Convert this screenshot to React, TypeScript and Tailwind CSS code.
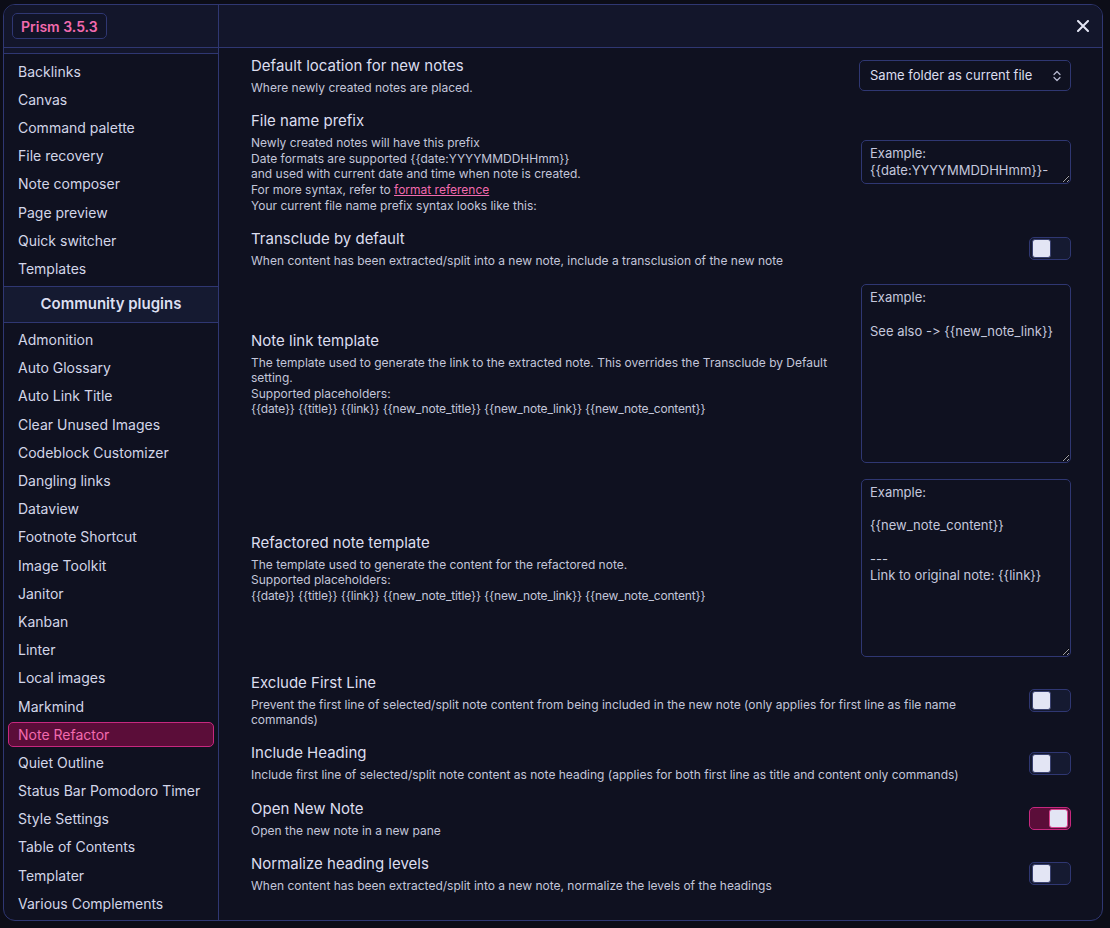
import React from 'react';

const corePlugins = [
  'Backlinks',
  'Canvas',
  'Command palette',
  'File recovery',
  'Note composer',
  'Page preview',
  'Quick switcher',
  'Templates',
];

const communityPlugins = [
  'Admonition',
  'Auto Glossary',
  'Auto Link Title',
  'Clear Unused Images',
  'Codeblock Customizer',
  'Dangling links',
  'Dataview',
  'Footnote Shortcut',
  'Image Toolkit',
  'Janitor',
  'Kanban',
  'Linter',
  'Local images',
  'Markmind',
  'Note Refactor',
  'Quiet Outline',
  'Status Bar Pomodoro Timer',
  'Style Settings',
  'Table of Contents',
  'Templater',
  'Various Complements',
];

const placeholders = '{{date}} {{title}} {{link}} {{new_note_title}} {{new_note_link}} {{new_note_content}}';

function NavItem({ label, active }: { label: string; active?: boolean }) {
  return (
    <div className="h-[28.2px] px-[4px] py-[1.6px]">
      <div
        className={
          active
            ? 'h-full px-[9px] flex items-center rounded-[5px] border border-[#c7287f] bg-[#5b0d39] text-[#f26aae] text-[14px]'
            : 'h-full px-[9px] flex items-center rounded-[5px] border border-transparent text-[#d3d6e8] text-[14px]'
        }
      >
        {label}
      </div>
    </div>
  );
}

function Toggle({ on }: { on?: boolean }) {
  return (
    <div
      className={
        on
          ? 'w-[42px] h-[23px] rounded-[5px] border border-[#c7287f] bg-[#5b0d39] flex items-center justify-end px-[2px] shrink-0'
          : 'w-[42px] h-[23px] rounded-[5px] border border-[#2f3772] bg-[#151a31] flex items-center justify-start px-[2px] shrink-0'
      }
    >
      <div
        className={
          on
            ? 'w-[19px] h-[19px] rounded-[3px] bg-[#e3e5f4] border border-[#d9428f]'
            : 'w-[19px] h-[19px] rounded-[3px] bg-[#e3e5f4] border border-[#3a4170]'
        }
      />
    </div>
  );
}

function TextBox({ value, h }: { value: string; h: string }) {
  return (
    <textarea
      readOnly
      defaultValue={value}
      className={`${h} w-[210px] shrink-0 rounded-[5px] border border-[#2f3772] bg-[#0f1120] px-[8px] py-[4px] text-[13px] leading-[16.7px] text-[#c4c7dc] outline-none overflow-hidden [font-feature-settings:'calt'_0,'liga'_0]`}
    />
  );
}

function Setting({
  title,
  children,
  control,
}: {
  title: string;
  children: React.ReactNode;
  control: React.ReactNode;
}) {
  return (
    <div className="flex items-center gap-6">
      <div className="flex-1 min-w-0">
        <div className="text-[15px] leading-[20px] text-[#dcdeef]">{title}</div>
        <div className="mt-[4px] text-[12px] leading-[15.6px] text-[#c3c6da]">{children}</div>
      </div>
      {control}
    </div>
  );
}

export default function App() {
  return (
    <div className="min-h-screen bg-[#0c0d17] pt-[4px] pl-[3px] font-[family-name:Inter,Liberation_Sans,sans-serif]">
      <div className="w-[1100px] h-[917px] rounded-[12px] border border-[#2f3772] bg-[#0f1120] flex overflow-hidden">
        {/* Sidebar */}
        <aside className="w-[215px] shrink-0 border-r border-[#2f3772] flex flex-col">
          <div className="h-[43px] shrink-0 border-b border-[#2f3772] bg-[#13162b] pl-[8px] pt-[8px]">
            <div className="inline-flex items-center h-[26px] px-[8px] rounded-[5px] border border-[#2f3772] bg-[#111428] text-[14px] font-semibold text-[#f26aae]">
              Prism 3.5.3
            </div>
          </div>
          <div className="h-[5px] shrink-0 bg-[#13162b]" />
          <div className="flex-1 flex flex-col border-t border-[#2f3772] pt-[3px]">
            {corePlugins.map((p) => (
              <NavItem key={p} label={p} />
            ))}
            <div className="mt-[3px] h-[37px] shrink-0 border-y border-[#2f3772] bg-[#151a31] flex items-center justify-center text-[15px] font-semibold text-[#dcdff0]">
              Community plugins
            </div>
            <div className="pt-[3px] flex flex-col">
              {communityPlugins.map((p) => (
                <NavItem key={p} label={p} active={p === 'Note Refactor'} />
              ))}
            </div>
          </div>
        </aside>

        {/* Content */}
        <main className="flex-1 min-w-0 flex flex-col">
          <div className="h-[43px] shrink-0 border-b border-[#2f3772] bg-[#13162b] flex items-center justify-end pr-[13px]">
            <svg width="12" height="12" viewBox="0 0 12 12" className="text-[#e3e5f4]">
              <path d="M1 1L11 11M11 1L1 11" stroke="currentColor" strokeWidth="2" strokeLinecap="round" />
            </svg>
          </div>
          <div className="flex-1 pl-[32px] pr-[31px] pt-[8px] flex flex-col gap-[15.7px]">
            <Setting
              title="Default location for new notes"
              control={
                <div className="w-[212px] h-[31px] shrink-0 rounded-[5px] border border-[#2f3772] bg-[#0f1120] pl-[10px] pr-[9px] flex items-center justify-between text-[13px] text-[#dcdeef]">
                  <span>Same folder as current file</span>
                  <svg width="8" height="12" viewBox="0 0 8 12" className="text-[#b9bcd2]">
                    <path d="M1 4.5L4 1.5L7 4.5M1 7.5L4 10.5L7 7.5" fill="none" stroke="currentColor" strokeWidth="1.2" strokeLinecap="round" strokeLinejoin="round" />
                  </svg>
                </div>
              }
            >
              Where newly created notes are placed.
            </Setting>

            <Setting
              title="File name prefix"
              control={<TextBox h="h-[44px]" value={'Example:\n{{date:YYYYMMDDHHmm}}-'} />}
            >
              <div>Newly created notes will have this prefix</div>
              <div>Date formats are supported {'{{date:YYYYMMDDHHmm}}'}</div>
              <div>and used with current date and time when note is created.</div>
              <div>
                For more syntax, refer to{' '}
                <span className="text-[#f26aae] underline">format reference</span>
              </div>
              <div>Your current file name prefix syntax looks like this:</div>
            </Setting>

            <Setting title="Transclude by default" control={<Toggle />}>
              When content has been extracted/split into a new note, include a transclusion of the new note
            </Setting>

            <Setting
              title="Note link template"
              control={<TextBox h="h-[179px]" value={'Example:\n\nSee also -> {{new_note_link}}'} />}
            >
              <div>
                The template used to generate the link to the extracted note. This overrides the Transclude by Default
                setting.
              </div>
              <div>Supported placeholders:</div>
              <div className="tracking-[-0.16px]">{placeholders}</div>
            </Setting>

            <Setting
              title="Refactored note template"
              control={
                <TextBox
                  h="h-[178px]"
                  value={'Example:\n\n{{new_note_content}}\n\n---\nLink to original note: {{link}}'}
                />
              }
            >
              <div>The template used to generate the content for the refactored note.</div>
              <div>Supported placeholders:</div>
              <div className="tracking-[-0.16px]">{placeholders}</div>
            </Setting>

            <Setting title="Exclude First Line" control={<Toggle />}>
              Prevent the first line of selected/split note content from being included in the new note (only applies for
              first line as file name commands)
            </Setting>

            <Setting title="Include Heading" control={<Toggle />}>
              Include first line of selected/split note content as note heading (applies for both first line as title and
              content only commands)
            </Setting>

            <Setting title="Open New Note" control={<Toggle on />}>
              Open the new note in a new pane
            </Setting>

            <Setting title="Normalize heading levels" control={<Toggle />}>
              When content has been extracted/split into a new note, normalize the levels of the headings
            </Setting>
          </div>
        </main>
      </div>
    </div>
  );
}
